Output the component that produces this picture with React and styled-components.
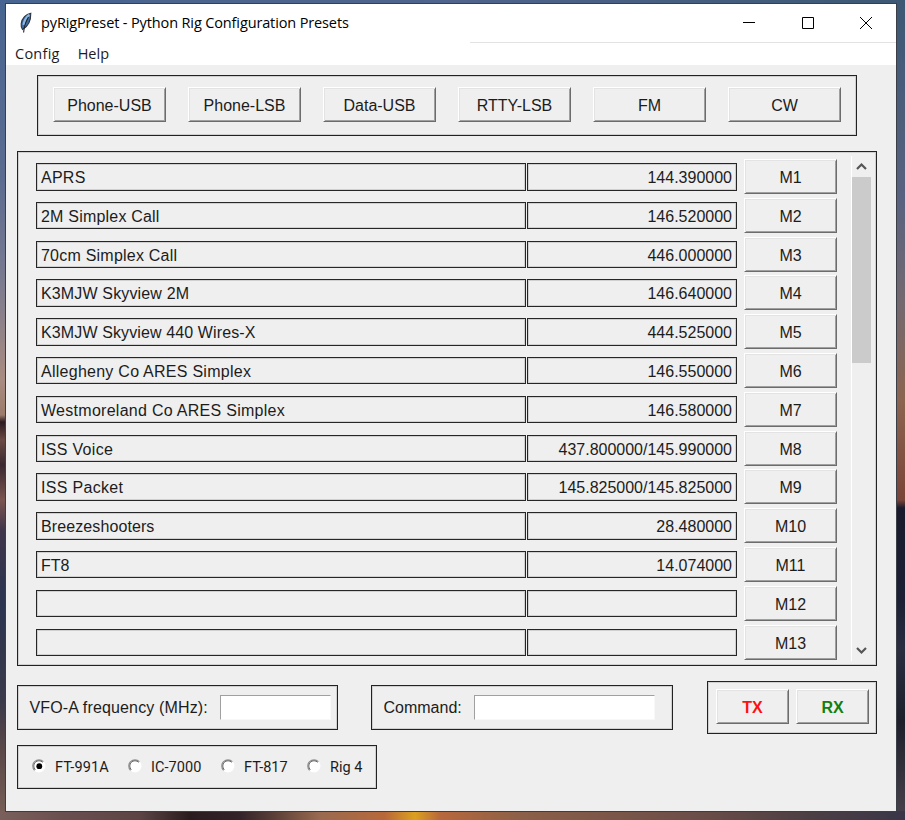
import React, { useState } from "react";
import styled, { createGlobalStyle, css } from "styled-components";

const GlobalStyle = createGlobalStyle`
  * { box-sizing: border-box; }
  body { margin: 0; overflow: hidden; }
  button, input { font: inherit; margin: 0; padding: 0; }
`;

const Desktop = styled.div`
  width: 905px;
  height: 820px;
  padding: 3px 8px 8px 5px;
  background:
    linear-gradient(90deg, #7a605c 0, #6b5050 60px, #5c4444 140px, #2a1c1e 190px, #33232a 240px, #5c4038 275px, #9a6a50 320px, #b8683a 385px, #dca020 415px, #b8683c 440px, #8c6048 520px, #6b4d48 700px, #4e4044 800px, #3a3648 905px) 0 100% / 905px 9px no-repeat,
    linear-gradient(90deg, #476590, #50648c 50%, #3c5874) 0 0 / 905px 3px no-repeat,
    linear-gradient(180deg, #476590 0, #5c6c90 180px, #7a7a90 280px, #a98c80 380px, #9b7b6b 415px, #2b1a20 422px, #6b4a45 440px, #3a2830 465px, #7a5450 500px, #40354a 530px, #2c3450 600px, #3a3a4a 700px, #5a4848 750px, #7a6058 820px) 0 0 / 6px 820px no-repeat,
    linear-gradient(180deg, #3c5874 0, #596280 200px, #746870 300px, #8c6450 400px, #7a4438 500px, #1a1a2c 508px, #1c2036 600px, #2a2e40 650px, #1d1f2b 720px, #4a424c 820px) 100% 0 / 10px 820px no-repeat;
`;

const Window = styled.main`
  width: 892px;
  height: 809px;
  display: flex;
  flex-direction: column;
  background: #efefef;
  border: 1px solid #3a3e46;
  color: #1c1c1c;
  font-family: "Liberation Sans", Arial, sans-serif;
  font-size: 16px;
`;

const TitleBar = styled.header`
  height: 38px;
  flex: none;
  display: flex;
  align-items: center;
  background: #fff;
  padding: 0 24px 0 13px;
`;

const Title = styled.h1`
  flex: 1;
  margin: 0 0 0 8px;
  color: #000;
  font: 400 14.5px/20px "Open Sans", sans-serif;
  letter-spacing: ${(p) => p.$track}px;
  white-space: nowrap;
`;

const WindowControls = styled.div`
  display: flex;
  gap: 46.5px;
`;

const ControlButton = styled.button`
  width: 12px;
  height: 12px;
  border: 0;
  background: none;
  display: block;
  svg { display: block; }
`;

const MenuBar = styled.nav`
  height: 23px;
  flex: none;
  display: flex;
  gap: 18px;
  padding: 0 9px;
  background: linear-gradient(#e2e2e2, #e2e2e2) 100% 0 / 426px 1px no-repeat #fff;
`;

const MenuItem = styled.span`
  font: 400 14.5px/24px "Open Sans", sans-serif;
  letter-spacing: ${(p) => p.$track}px;
`;

const Content = styled.div`
  flex: 1;
  display: flex;
  flex-direction: column;
  align-items: flex-start;
  padding: 10px 0 0 11px;
`;

const Frame = styled.section`
  border: 1px solid #222;
  box-shadow: inset 0 0 0 1px rgba(0, 0, 0, 0.13);
`;

const raised = css`
  border: 1px solid;
  border-color: #fff #6c6c6c #6c6c6c #fff;
  box-shadow: inset 1px 1px #e3e3e3, inset -1px -1px #a0a0a0;
  background: #efefef;
`;

const PushButton = styled.button`
  ${raised}
  flex: none;
  width: ${(p) => p.$w}px;
  height: 35px;
  color: ${(p) => p.$color || "#1c1c1c"};
  font-weight: ${(p) => (p.$color ? 700 : 400)};
  line-height: 33px;
  padding-top: 1px;
`;

const ModeFrame = styled(Frame)`
  width: 820px;
  height: 61px;
  margin-left: 20px;
  padding: 11px 15px;
  display: flex;
  gap: 22px;
`;

const MemoryFrame = styled(Frame)`
  width: 860px;
  height: 515px;
  margin-top: 15px;
  display: flex;
  padding: 4px 5px 4px 18px;
`;

const MemoryList = styled.div`
  width: 801px;
  flex: none;
  padding-top: 3px;
  display: grid;
  grid-auto-rows: 38.8px;
`;

const MemoryRow = styled.div`
  display: flex;
  align-items: flex-start;
`;

const Cell = styled.div`
  flex: none;
  width: ${(p) => p.$w}px;
  height: 27.5px;
  margin-top: 4px;
  margin-right: ${(p) => p.$gap}px;
  padding: 0 4px;
  border: 1px solid #262626;
  box-shadow: inset 0 0 0 1px rgba(0, 0, 0, 0.13);
  line-height: 27px;
  text-align: ${(p) => p.$align || "left"};
  letter-spacing: ${(p) => p.$track || 0}px;
  white-space: nowrap;
`;

const ScrollBar = styled.div`
  margin-left: 14px;
  width: 20px;
  height: 505px;
  display: flex;
  flex-direction: column;
  border-left: 1px solid #fff;
`;

const ScrollArrow = styled.div`
  height: 21px;
  flex: none;
  display: grid;
  place-items: center;
`;

const Thumb = styled.div`
  height: 186px;
  background: #cbcbcb;
`;

const ScrollTrack = styled.div`
  flex: 1;
`;

const BottomRow = styled.div`
  display: flex;
  margin-top: 15px;
`;

const EntryFrame = styled(Frame)`
  width: ${(p) => p.$w}px;
  height: 45px;
  margin: 4px ${(p) => p.$gap}px 0 0;
  padding-left: 11.5px;
  display: flex;
  align-items: center;
`;

const EntryLabel = styled.label`
  width: ${(p) => p.$w}px;
  flex: none;
  letter-spacing: ${(p) => p.$track}px;
  white-space: nowrap;
`;

const Entry = styled.input`
  width: ${(p) => p.$w}px;
  height: 25px;
  border: 1px solid;
  border-color: #a0a0a0 #f8f8f8 #f8f8f8 #a0a0a0;
  border-radius: 0;
  background: #fff;
  outline: 0;
`;

const TxFrame = styled(Frame)`
  width: 170px;
  height: 53px;
  padding: 7px 8px;
  display: flex;
  gap: 7px;
`;

const RigFrame = styled(Frame)`
  width: 360px;
  height: 44px;
  margin-top: 11px;
  padding: 1px 0 0 14px;
  display: flex;
  align-items: center;
`;

const RigOption = styled.label`
  width: ${(p) => p.$w}px;
  flex: none;
  display: flex;
  align-items: center;
  gap: 9px;
  font: 400 14.5px/20px Roboto, sans-serif;
  letter-spacing: ${(p) => p.$track}px;
  white-space: nowrap;
  svg { flex: none; margin-top: -3px; }
`;

const Feather = () => (
  <svg width="14" height="22" viewBox="0 0 14 22">
    <path d="M11.800 1.200C7 2 3 6 2.200 11.500c-.3 2.500.1 4.500 1.300 6C8 15 12 9.500 11.800 1.200Z" fill="#3c6fa8" stroke="#30363e" strokeWidth="1.100" />
    <path d="M10.300 2.800C7.500 5 5.200 8.500 4.600 13" stroke="#8fb8e0" strokeWidth="2.200" fill="none" />
    <path d="M9.500 5C6.500 10 5 15 4.600 20.500" stroke="#20242a" strokeWidth="1.100" fill="none" />
  </svg>
);

const Chevron = ({ down }) => (
  <svg width="11" height="9" viewBox="0 0 11 9">
    <path d={down ? "M1 2 5.500 6.500 10 2" : "M1 7 5.500 2.500 10 7"} fill="none" stroke="#555" strokeWidth="2.200" />
  </svg>
);

const RadioMark = ({ on }) => (
  <svg width="14" height="14" viewBox="0 0 14 14">
    <circle cx="7" cy="7" r="6.500" fill="#fff" />
    <path d="M2.600 11.400A6.200 6.200 0 1 1 11.400 2.600" fill="none" stroke="#8c8c8c" strokeWidth="1.200" />
    <path d="M3.300 10.700A5.200 5.200 0 0 1 10.700 3.300" fill="none" stroke="#6a6a6a" strokeWidth="1" />
    {on && <circle cx="7.300" cy="7.200" r="2.900" fill="#000" />}
  </svg>
);

const modes = ["Phone-USB", "Phone-LSB", "Data-USB", "RTTY-LSB", "FM", "CW"];

const memories = [
  { name: "APRS", freq: "144.390000", track: 0.25 },
  { name: "2M Simplex Call", freq: "146.520000", track: 0.2 },
  { name: "70cm Simplex Call", freq: "446.000000", track: 0.22 },
  { name: "K3MJW Skyview 2M", freq: "146.640000", track: 0.15 },
  { name: "K3MJW Skyview 440 Wires-X", freq: "444.525000", track: 0.12 },
  { name: "Allegheny Co ARES Simplex", freq: "146.550000", track: 0.26 },
  { name: "Westmoreland Co ARES Simplex", freq: "146.580000", track: 0.28 },
  { name: "ISS Voice", freq: "437.800000/145.990000", track: 0.32 },
  { name: "ISS Packet", freq: "145.825000/145.825000", track: 0.32 },
  { name: "Breezeshooters", freq: "28.480000", track: 0.1 },
  { name: "FT8", freq: "14.074000", track: 0 },
  { name: "", freq: "", track: 0 },
  { name: "", freq: "", track: 0 },
];

const rigs = [
  { name: "FT-991A", w: 96, track: 0.1 },
  { name: "IC-7000", w: 93, track: 0.05 },
  { name: "FT-817", w: 86, track: 0 },
  { name: "Rig 4", w: 60, track: 0 },
];

export default function App() {
  const [rig, setRig] = useState(0);
  return (
    <Desktop>
      <GlobalStyle />
      <Window>
        <TitleBar>
          <Feather />
          <Title $track={-0.13}>pyRigPreset - Python Rig Configuration Presets</Title>
          <WindowControls>
            <ControlButton aria-label="Minimize">
              <svg width="12" height="12"><path d="M0 5.500h12" stroke="#000" /></svg>
            </ControlButton>
            <ControlButton aria-label="Maximize">
              <svg width="12" height="12"><path d="M.5.5h11v11H.5z" fill="none" stroke="#000" /></svg>
            </ControlButton>
            <ControlButton aria-label="Close">
              <svg width="12" height="12"><path d="M0 0 12 12M12 0 0 12" stroke="#000" /></svg>
            </ControlButton>
          </WindowControls>
        </TitleBar>
        <MenuBar>
          <MenuItem $track={0.25}>Config</MenuItem>
          <MenuItem $track={0}>Help</MenuItem>
        </MenuBar>
        <Content>
          <ModeFrame>
            {modes.map((m) => <PushButton key={m} $w={113}>{m}</PushButton>)}
          </ModeFrame>
          <MemoryFrame>
            <MemoryList>
              {memories.map(({ name, freq, track }, i) => (
                <MemoryRow key={i}>
                  <Cell $w={490} $gap={1} $track={track}>{name}</Cell>
                  <Cell $w={210} $gap={7} $align="right">{freq}</Cell>
                  <PushButton $w={93}>M{i + 1}</PushButton>
                </MemoryRow>
              ))}
            </MemoryList>
            <ScrollBar>
              <ScrollArrow><Chevron /></ScrollArrow>
              <Thumb />
              <ScrollTrack />
              <ScrollArrow><Chevron down /></ScrollArrow>
            </ScrollBar>
          </MemoryFrame>
          <BottomRow>
            <EntryFrame $w={321} $gap={33}>
              <EntryLabel $w={190} $track={0.15} htmlFor="vfo">VFO-A frequency (MHz):</EntryLabel>
              <Entry id="vfo" $w={111} />
            </EntryFrame>
            <EntryFrame $w={302} $gap={34}>
              <EntryLabel $w={90} $track={0} htmlFor="command">Command:</EntryLabel>
              <Entry id="command" $w={181} />
            </EntryFrame>
            <TxFrame>
              <PushButton $w={73} $color="#ff1010">TX</PushButton>
              <PushButton $w={73} $color="#108010">RX</PushButton>
            </TxFrame>
          </BottomRow>
          <RigFrame>
            {rigs.map((r, i) => (
              <RigOption key={r.name} $w={r.w} $track={r.track} onClick={() => setRig(i)}>
                <RadioMark on={rig === i} />
                {r.name}
              </RigOption>
            ))}
          </RigFrame>
        </Content>
      </Window>
    </Desktop>
  );
}
